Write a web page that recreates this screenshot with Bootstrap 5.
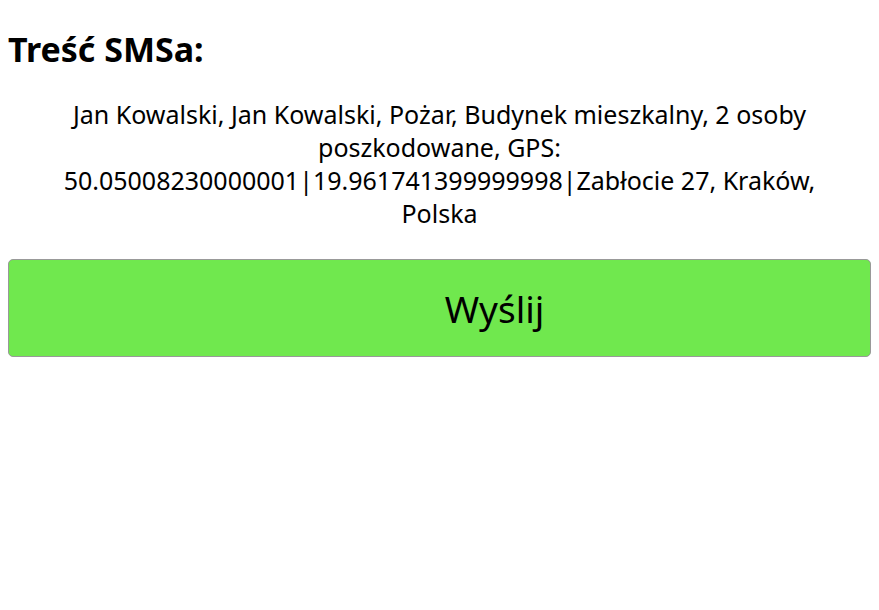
<!DOCTYPE html>
<html lang="pl">
<head>
<meta charset="utf-8">
<meta name="viewport" content="width=device-width, initial-scale=1">
<title>Treść SMSa</title>
<link href="https://cdn.jsdelivr.net/npm/bootstrap@5.3.0/dist/css/bootstrap.min.css" rel="stylesheet">
<style>
body { font-family: "Noto Sans", "Open Sans", sans-serif; color: #000; }
.sms-title { font-size: 34px; line-height: 42px; margin-bottom: 28px; }
.sms-text { font-size: 25px; line-height: 33px; padding: 0 48px; margin-bottom: 29px; }
.btn.send-btn {
  --bs-btn-bg: #70e84e; --bs-btn-border-color: #999; --bs-btn-color: #000;
  --bs-btn-hover-bg: #62dc41; --bs-btn-hover-border-color: #888; --bs-btn-hover-color: #000;
  --bs-btn-border-radius: 5px;
  font-size: 37px; line-height: 48px; padding: 25px 0 23px 110px;
}
</style>
</head>
<body>
<main class="container-fluid px-2 pt-4">
  <h1 class="sms-title fw-bold mt-1">Treść SMSa:</h1>
  <p class="sms-text text-center">Jan Kowalski, Jan Kowalski, Pożar, Budynek mieszkalny, 2 osoby poszkodowane, GPS: 50.05008230000001|19.961741399999998|Zabłocie 27, Kraków, Polska</p>
  <button type="button" class="btn send-btn w-100">Wyślij</button>
</main>
<script src="https://cdn.jsdelivr.net/npm/bootstrap@5.3.0/dist/js/bootstrap.bundle.min.js"></script>
</body>
</html>
